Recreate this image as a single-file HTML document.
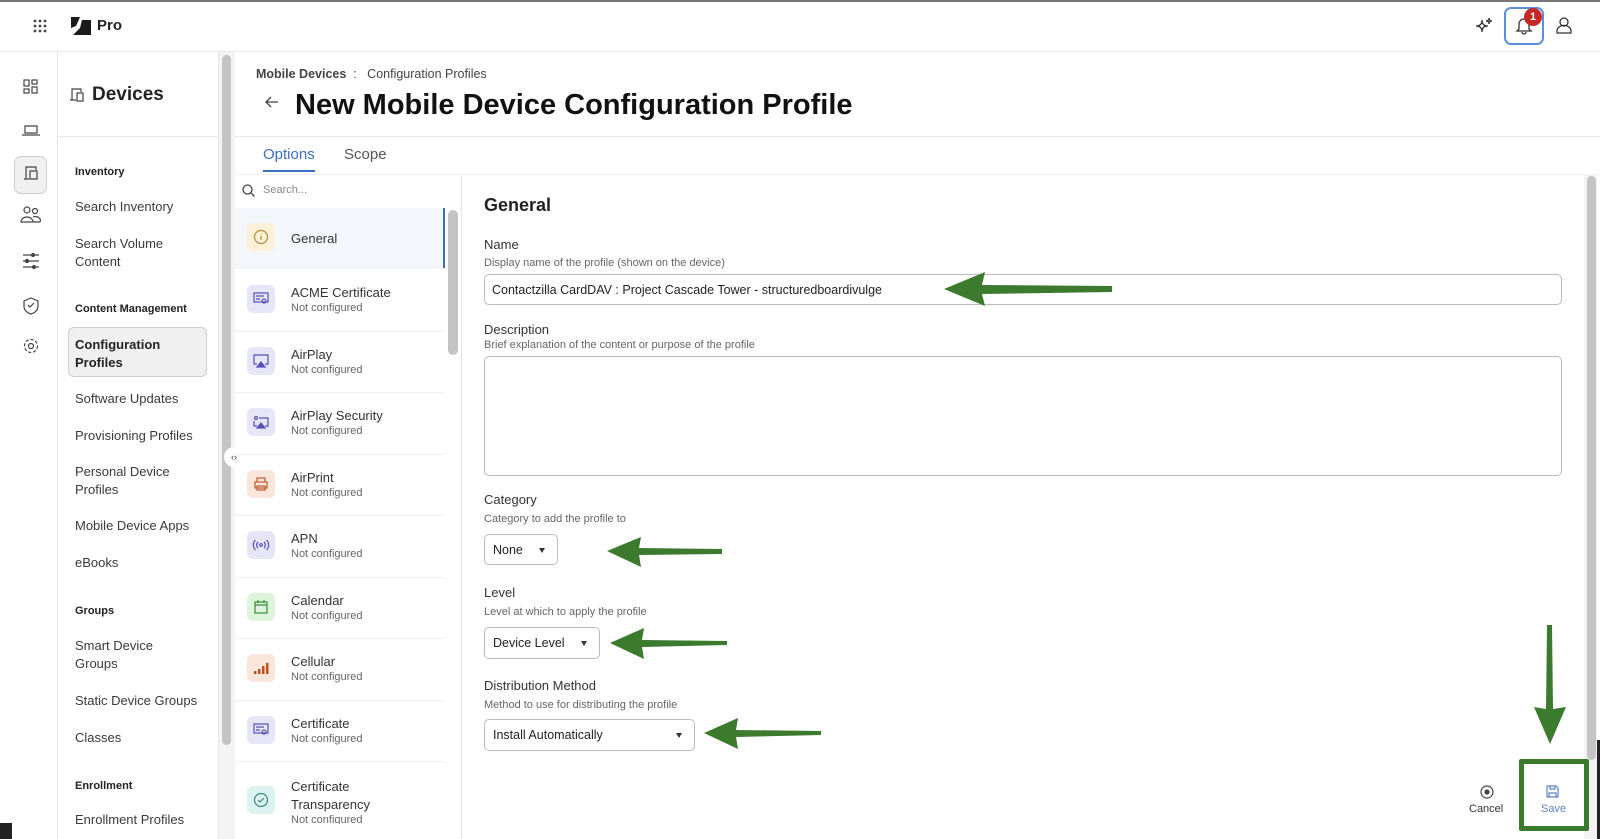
<!DOCTYPE html>
<html><head><meta charset="utf-8"><style>
*{box-sizing:border-box;margin:0;padding:0}
body{width:1600px;height:839px;overflow:hidden;background:#fff;font-family:"Liberation Sans",sans-serif;color:#333;position:relative}
.a{position:absolute}
.nav{font-size:13px;color:#3a3a3a;line-height:17.5px}
.navh{font-size:11px;font-weight:bold;color:#222}
.item{position:absolute;left:235px;width:210px;height:61.5px;border-bottom:1px solid #eee}
.ic{position:absolute;left:12px;top:15px;width:28px;height:28px;border-radius:6px;display:flex;align-items:center;justify-content:center}
.t1{position:absolute;left:56px;top:15px;font-size:13px;color:#333}
.t2{position:absolute;left:56px;top:32px;font-size:11px;color:#666}
.lbl{font-size:13px;color:#333}
.sub{font-size:11px;color:#666}
.sel{position:absolute;border:1px solid #bbb;border-radius:5px;font-size:12.5px;color:#222;padding:8px 0 0 8px}
.sel i{position:absolute;right:12px;top:13px;border-left:3.5px solid transparent;border-right:3.5px solid transparent;border-top:5px solid #333}
</style></head><body>
<div class="a" style="left:0;top:0;width:1600px;height:2px;background:#777"></div>
<div class="a" style="left:0;top:823px;width:12px;height:16px;background:#222"></div>
<div class="a" style="left:0;top:815px;width:24px;height:24px;background:#fff;border-bottom-left-radius:14px;border-left:2px solid #222;border-bottom:2px solid #222;display:none"></div>
<div class="a" style="right:0;top:740px;width:3px;height:99px;background:#222"></div>
<!-- top bar -->
<svg class="a" style="left:33px;top:19px" width="14" height="14"><g fill="#444"><circle cx="2" cy="2" r="1.4"/><circle cx="7" cy="2" r="1.4"/><circle cx="12" cy="2" r="1.4"/><circle cx="2" cy="7" r="1.4"/><circle cx="7" cy="7" r="1.4"/><circle cx="12" cy="7" r="1.4"/><circle cx="2" cy="12" r="1.4"/><circle cx="7" cy="12" r="1.4"/><circle cx="12" cy="12" r="1.4"/></g></svg>
<svg class="a" style="left:71px;top:17px" width="20" height="18"><path d="M0 0H9L5 9L0 11Z M11 3H20V18H2L9 11Z" fill="#1a1a1a"/></svg>
<div class="a" style="left:97px;top:17px;font-size:15px;font-weight:bold;color:#222">Pro</div>
<svg class="a" style="left:1475px;top:17px" width="18" height="18" fill="none" stroke="#333" stroke-width="1.3"><path d="M7 3Q7 9 1 9Q7 9 7 15Q7 9 13 9Q7 9 7 3Z"/><path d="M14 1Q14 4 11 4Q14 4 14 7Q14 4 17 4Q14 4 14 1Z"/></svg>
<div class="a" style="left:1504px;top:7px;width:40px;height:38px;border:2px solid #5b8fd8;border-radius:7px"></div>
<svg class="a" style="left:1515px;top:16px" width="18" height="19" fill="none" stroke="#333" stroke-width="1.3"><path d="M4 13V8a5 5 0 0 1 10 0v5l2 2H2Z M7 16a2 2 0 0 0 4 0"/></svg>
<div class="a" style="left:1524px;top:8px;width:18px;height:18px;border-radius:50%;background:#c62828;color:#fff;font-size:11px;font-weight:bold;text-align:center;line-height:18px">1</div>
<svg class="a" style="left:1555px;top:16px" width="18" height="19" fill="none" stroke="#333" stroke-width="1.3"><circle cx="9" cy="6" r="4"/><path d="M2 17v-2a5 4 0 0 1 14 0v2Z"/></svg>
<div class="a" style="left:0;top:51px;width:1600px;height:1px;background:#e6e6e6"></div>
<!-- rail -->
<div class="a" style="left:57px;top:52px;width:1px;height:787px;background:#e6e6e6"></div>
<div class="a" style="left:14px;top:156px;width:33px;height:38px;border:1px solid #ccc;border-radius:7px;background:#f0f0f0"></div>
<svg class="a" style="left:0;top:52px" width="57" height="320" fill="none" stroke="#444" stroke-width="1.2">
<rect x="24" y="28" width="5" height="6"/><rect x="32" y="28" width="5" height="4"/><rect x="24" y="37" width="5" height="4"/><rect x="32" y="35" width="5" height="6"/>
<path d="M25 74h12v7H25Z M22 83h18"/>
<path d="M26 127V115h10v3 M24 127h5 M30 119h7v8h-7Z"/>
<circle cx="27" cy="158" r="3"/><circle cx="35" cy="159" r="2.5"/><path d="M21 170a6 5 0 0 1 12 0Z M33 170h7a5 4 0 0 0-7-5"/>
<path d="M23 203h16 M23 209h16 M23 215h16"/><circle cx="33" cy="203" r="1.5" fill="#444"/><circle cx="27" cy="209" r="1.5" fill="#444"/><circle cx="34" cy="215" r="1.5" fill="#444"/>
<path d="M31 246l7 3v5c0 4-3 7-7 8c-4-1-7-4-7-8v-5Z M28 253l2 2l4-4"/>
<circle cx="31" cy="294" r="2.5"/><circle cx="31" cy="294" r="6.5" stroke-dasharray="3 2"/>
</svg>
<!-- left nav -->
<svg class="a" style="left:69px;top:87px" width="16" height="16" fill="none" stroke="#444" stroke-width="1.2"><path d="M3 13V2h9v3 M1 13h6 M8 6h6v8H8Z"/></svg>
<div class="a" style="left:92px;top:84px;font-size:19px;font-weight:bold;color:#222">Devices</div>
<div class="a" style="left:57px;top:136px;width:161px;height:1px;background:#e6e6e6"></div>
<div class="a" style="left:68px;top:327px;width:139px;height:50px;border:1px solid #ccc;border-radius:6px;background:#f0f0f0"></div>
<div class="a navh" style="left:75px;top:166px">Inventory</div>
<div class="a nav" style="left:75px;top:198px">Search Inventory</div>
<div class="a nav" style="left:75px;top:235px">Search Volume<br>Content</div>
<div class="a navh" style="left:75px;top:303px">Content Management</div>
<div class="a nav" style="left:75px;top:336px;font-weight:bold;color:#222">Configuration<br>Profiles</div>
<div class="a nav" style="left:75px;top:390px">Software Updates</div>
<div class="a nav" style="left:75px;top:427px">Provisioning Profiles</div>
<div class="a nav" style="left:75px;top:463px">Personal Device<br>Profiles</div>
<div class="a nav" style="left:75px;top:517px">Mobile Device Apps</div>
<div class="a nav" style="left:75px;top:554px">eBooks</div>
<div class="a navh" style="left:75px;top:605px">Groups</div>
<div class="a nav" style="left:75px;top:637px">Smart Device<br>Groups</div>
<div class="a nav" style="left:75px;top:692px">Static Device Groups</div>
<div class="a nav" style="left:75px;top:729px">Classes</div>
<div class="a navh" style="left:75px;top:780px">Enrollment</div>
<div class="a nav" style="left:75px;top:811px">Enrollment Profiles</div>
<div class="a" style="left:218px;top:52px;width:17px;height:787px;background:#f3f3f3;border-left:1px solid #e6e6e6"></div>
<div class="a" style="left:222px;top:55px;width:9px;height:690px;border-radius:5px;background:#c4c4c4"></div>
<div class="a" style="left:224px;top:447px;width:20px;height:20px;border-radius:50%;background:#fff;font-size:9px;text-align:center;line-height:20px;color:#333">‹›</div>
<!-- header -->
<div class="a" style="left:256px;top:67px;font-size:12.5px;color:#444"><b style="color:#444">Mobile Devices</b> &nbsp;:&nbsp;&nbsp; Configuration Profiles</div>
<svg class="a" style="left:265px;top:96px" width="14" height="12" fill="none" stroke="#444" stroke-width="1.3"><path d="M13 6H1 M6 1L1 6l5 5"/></svg>
<div class="a" style="left:295px;top:89px;font-size:29px;font-weight:bold;color:#111">New Mobile Device Configuration Profile</div>
<div class="a" style="left:235px;top:136px;width:1365px;height:1px;background:#e6e6e6"></div>
<div class="a" style="left:263px;top:146px;font-size:15px;color:#3b6fc0">Options</div>
<div class="a" style="left:263px;top:170px;width:52px;height:2px;background:#3b6fc0"></div>
<div class="a" style="left:344px;top:146px;font-size:15px;color:#555">Scope</div>
<!-- list -->
<div class="a" style="left:461px;top:174px;width:1px;height:665px;background:#e6e6e6"></div>
<div class="a" style="left:235px;top:174px;width:1365px;height:1px;background:#eee"></div>
<svg class="a" style="left:242px;top:184px" width="13" height="13" fill="none" stroke="#444" stroke-width="1.3"><circle cx="5.5" cy="5.5" r="4.5"/><path d="M9 9l3.5 3.5"/></svg>
<div class="a" style="left:263px;top:184px;font-size:11px;color:#888">Search...</div>
<div class="a" style="left:235px;top:208px;width:210px;height:61px;background:#f3f6fa"></div>
<div class="a" style="left:443px;top:208px;width:2px;height:60px;background:#3b6fc0"></div>
<div class="a" style="left:448px;top:210px;width:10px;height:145px;border-radius:5px;background:#c4c4c4"></div>
<div class="item" style="top:208px;border:none"><div class="ic" style="background:#fbf0d8"><svg width="16" height="16" fill="none" stroke="#b58a3a" stroke-width="1.2"><circle cx="8" cy="8" r="6.5"/><path d="M8 7v4 M8 5v.5"/></svg></div><div class="t1" style="top:23px">General</div></div>
<div class="item" style="top:270px"><div class="ic" style="background:#e7e6f8"><svg width="16" height="14" fill="none" stroke="#5a4fb5" stroke-width="1.2"><rect x="1" y="1" width="14" height="9"/><path d="M3 4h8 M3 7h4"/><circle cx="11" cy="9" r="2"/></svg></div><div class="t1">ACME Certificate</div><div class="t2">Not configured</div></div>
<div class="item" style="top:331.5px"><div class="ic" style="background:#e7e6f8"><svg width="16" height="14" fill="none" stroke="#5a4fb5" stroke-width="1.2"><path d="M4 10H1V1h14v9h-3"/><path d="M8 8l4 5H4Z" fill="#5a4fb5"/></svg></div><div class="t1">AirPlay</div><div class="t2">Not configured</div></div>
<div class="item" style="top:393px"><div class="ic" style="background:#e7e6f8"><svg width="16" height="14" fill="none" stroke="#5a4fb5" stroke-width="1.2"><path d="M6 3h9v8h-3 M1 6v5h3"/><circle cx="3" cy="3" r="1.5"/><path d="M8 8l4 5H4Z" fill="#5a4fb5"/></svg></div><div class="t1">AirPlay Security</div><div class="t2">Not configured</div></div>
<div class="item" style="top:454.5px"><div class="ic" style="background:#fbe6dc"><svg width="16" height="16" fill="none" stroke="#c0603a" stroke-width="1.3"><path d="M4 6V2h8v4 M2 6h12v6H2Z M4 10h8v4H4Z"/></svg></div><div class="t1">AirPrint</div><div class="t2">Not configured</div></div>
<div class="item" style="top:516px"><div class="ic" style="background:#e7e6f8"><svg width="18" height="12" fill="none" stroke="#5a4fb5" stroke-width="1.2"><circle cx="9" cy="6" r="1.3"/><path d="M6 3a4 4 0 0 0 0 6 M12 3a4 4 0 0 1 0 6 M3.5 1a7 7 0 0 0 0 10 M14.5 1a7 7 0 0 1 0 10"/></svg></div><div class="t1">APN</div><div class="t2">Not configured</div></div>
<div class="item" style="top:577.5px"><div class="ic" style="background:#ddf3dc"><svg width="16" height="16" fill="none" stroke="#3d8a3a" stroke-width="1.2"><rect x="2" y="3" width="12" height="11"/><path d="M2 6h12 M5 1v3 M11 1v3"/></svg></div><div class="t1">Calendar</div><div class="t2">Not configured</div></div>
<div class="item" style="top:639px"><div class="ic" style="background:#fbe6dc"><svg width="16" height="12" fill="#c0501a"><rect x="1" y="9" width="2.5" height="3"/><rect x="5" y="7" width="2.5" height="5"/><rect x="9" y="4" width="2.5" height="8"/><rect x="13" y="1" width="2.5" height="11"/></svg></div><div class="t1">Cellular</div><div class="t2">Not configured</div></div>
<div class="item" style="top:700.5px"><div class="ic" style="background:#e7e6f8"><svg width="16" height="14" fill="none" stroke="#5a4fb5" stroke-width="1.2"><rect x="1" y="1" width="14" height="9"/><path d="M3 4h8 M3 7h4"/><circle cx="11" cy="9" r="2"/></svg></div><div class="t1">Certificate</div><div class="t2">Not configured</div></div>
<div class="item" style="top:762px;height:77px;border:none"><div class="ic" style="top:24px;background:#dcf3ef"><svg width="16" height="16" fill="none" stroke="#3a8a7a" stroke-width="1.2"><circle cx="8" cy="8" r="6.5"/><path d="M5 8l2 2l4-4"/></svg></div><div class="t1" style="top:16px;line-height:18px">Certificate<br>Transparency</div><div class="t2" style="top:52px">Not configured</div></div>
<div class="a" style="left:235px;top:824px;width:226px;height:15px;background:#fff"></div>
<!-- form -->
<div class="a" style="left:484px;top:195px;font-size:18px;font-weight:bold;color:#222">General</div>
<div class="a lbl" style="left:484px;top:237px">Name</div>
<div class="a sub" style="left:484px;top:257px">Display name of the profile (shown on the device)</div>
<div class="a" style="left:484px;top:274px;width:1078px;height:31px;border:1px solid #bbb;border-radius:5px;font-size:12.5px;color:#222;padding:8px 0 0 7px">Contactzilla CardDAV : Project Cascade Tower - structuredboardivulge</div>
<div class="a lbl" style="left:484px;top:322px">Description</div>
<div class="a sub" style="left:484px;top:339px">Brief explanation of the content or purpose of the profile</div>
<div class="a" style="left:484px;top:356px;width:1078px;height:120px;border:1px solid #bbb;border-radius:5px"></div>
<div class="a lbl" style="left:484px;top:492px">Category</div>
<div class="a sub" style="left:484px;top:513px">Category to add the profile to</div>
<div class="sel" style="left:484px;top:534px;width:74px;height:31px">None<i></i></div>
<div class="a lbl" style="left:484px;top:585px">Level</div>
<div class="a sub" style="left:484px;top:606px">Level at which to apply the profile</div>
<div class="sel" style="left:484px;top:627px;width:116px;height:32px">Device Level<i></i></div>
<div class="a lbl" style="left:484px;top:678px">Distribution Method</div>
<div class="a sub" style="left:484px;top:699px">Method to use for distributing the profile</div>
<div class="sel" style="left:484px;top:719px;width:211px;height:32px">Install Automatically<i></i></div>
<div class="a" style="left:1584px;top:174px;width:13px;height:665px;background:#f3f3f3"></div>
<div class="a" style="left:1587px;top:176px;width:9px;height:584px;border-radius:5px;background:#c4c4c4"></div>
<!-- cancel/save -->
<svg class="a" style="left:1480px;top:785px" width="14" height="14" fill="none" stroke="#444" stroke-width="1.2"><circle cx="7" cy="7" r="6"/><circle cx="7" cy="7" r="2" fill="#444"/></svg>
<div class="a" style="left:1469px;top:803px;font-size:11px;color:#333">Cancel</div>
<div class="a" style="left:1519px;top:759px;width:70px;height:72px;border:5px solid #3c7a2e;border-radius:2px"></div>
<svg class="a" style="left:1546px;top:785px" width="13" height="13" fill="none" stroke="#5b82c8" stroke-width="1.2"><path d="M1 1h9l2 2v9H1Z M4 1v3h5V1 M3 12V8h7v4"/></svg>
<div class="a" style="left:1541px;top:803px;font-size:11px;color:#5b82c8">Save</div>
<!-- arrows -->
<svg class="a" style="left:0;top:0" width="1600" height="839"><g fill="#3c7a2e">
<path d="M944 289L985 272L982 285L1112 286L1112 292L982 294L985 306Z"/>
<path d="M607 551L641 537L639 548L722 549L722 554L639 555L641 567Z"/>
<path d="M610 643L644 628L642 640L727 641L727 645L642 647L644 659Z"/>
<path d="M704 733L738 718L736 730L821 731L821 735L736 737L738 749Z"/>
<path d="M1550 744L1534 707L1546 709L1547 625L1552 625L1553 709L1566 707Z"/>
</g></svg>
</body></html>
